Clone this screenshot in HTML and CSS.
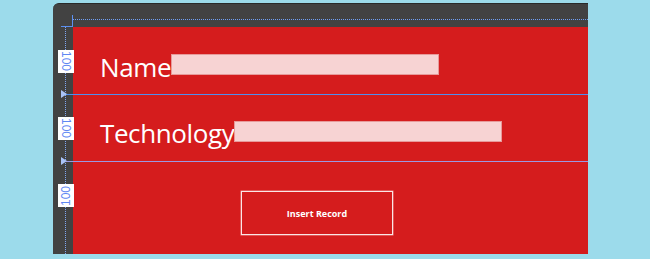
FILE: index.html
```html
<!DOCTYPE html>
<html>
<head>
<meta charset="utf-8">
<link rel="stylesheet" href="styles.css">
</head>
<body>
<div class="frame">
  <div class="topbar">
    <div class="hruler"></div>
    <div class="corner"></div>
  </div>
  <div class="grid">
    <div class="vline"></div>
    <div class="canvas"></div>

    <div class="field row1">
      <span class="label">Name</span>
      <span class="box"></span>
    </div>
    <div class="field row2">
      <span class="label">Technology</span>
      <span class="box box2"></span>
    </div>
    <div class="action row3">
      <button class="btn">Insert Record</button>
    </div>

    <div class="rowline row1"></div>
    <div class="rowline rowline2 row2"></div>

    <div class="size row1">100</div>
    <div class="size row2">100</div>
    <div class="size size-flip row3">100</div>
  </div>
</div>
</body>
</html>
```
FILE: styles.css
```css
html, body {
  margin: 0;
  padding: 0;
}
body {
  background: #9cdbeb;
  width: 650px;
  height: 259px;
  overflow: hidden;
  font-family: "Open Sans", "Noto Sans", sans-serif;
}
.frame {
  margin: 3px 0 0 53px;
  width: 535px;
  height: 251px;
  box-sizing: border-box;
  background: #424242;
  border-top: 1px solid #2a2a2a;
  border-top-left-radius: 6px;
  overflow: hidden;
  display: flex;
  flex-direction: column;
}
.topbar {
  height: 23px;
  flex: none;
  position: relative;
}
.hruler {
  margin-left: 20px;
  height: 16px;
  box-sizing: border-box;
  border-bottom: 1px dotted #6f9ff5;
}
.corner {
  position: absolute;
  left: 8px;
  top: 11px;
  width: 12px;
  height: 12px;
  box-sizing: border-box;
  border-right: 1px solid #5b8ff0;
  border-bottom: 1px solid #5b8ff0;
}
.grid {
  flex: 1;
  display: grid;
  grid-template-columns: 20px 1fr;
  grid-template-rows: 68px 67px 67px 1fr;
}
.vline {
  grid-column: 1;
  grid-row: 1 / -1;
  width: 13px;
  box-sizing: border-box;
  border-right: 1px dotted #7fa6f2;
}
.canvas {
  grid-column: 2;
  grid-row: 1 / -1;
  background: #d51c1d;
}
.row1 { grid-row: 1; }
.row2 { grid-row: 2; }
.row3 { grid-row: 3; }

.field {
  grid-column: 2;
  display: flex;
  align-items: flex-start;
  padding-left: 27px;
}
.field.row1 { padding-top: 23px; }
.field.row2 { padding-top: 21px; }
.label {
  color: #ffffff;
  font-size: 26px;
  line-height: 35px;
  letter-spacing: -0.4px;
}
.box {
  width: 268px;
  height: 21px;
  box-sizing: border-box;
  margin-top: 4px;
  background: #f7d3d3;
  border: 1px solid #e79a9a;
}
.box2 { margin-top: 5px; }

.action {
  grid-column: 2;
  padding: 29px 0 0 168px;
}
.btn {
  display: flex;
  align-items: center;
  justify-content: center;
  width: 152px;
  height: 44px;
  box-sizing: border-box;
  background: transparent;
  border: 1px solid #fbe6e6;
  box-shadow: 0 0 0 0.5px rgba(255, 220, 220, 0.6);
  color: #ffffff;
  font-family: "Open Sans", "Noto Sans", sans-serif;
  font-weight: 700;
  font-size: 9px;
  padding: 0;
}

.rowline {
  grid-column: 1 / -1;
  align-self: end;
  height: 1px;
  margin-left: 8px;
  background: #4f8ff0;
  position: relative;
}
.rowline2 { background: #9b98e2; }
.rowline::before {
  content: "";
  position: absolute;
  left: 0;
  top: -4px;
  border-left: 6px solid #a9c3f7;
  border-top: 4px solid transparent;
  border-bottom: 4px solid transparent;
}

.size {
  grid-column: 1;
  justify-self: start;
  align-self: center;
  margin-left: 5px;
  width: 16px;
  height: 23px;
  background: #ffffff;
  color: #5f88f3;
  font-family: "Liberation Sans", sans-serif;
  font-size: 12px;
  line-height: 16px;
  writing-mode: vertical-rl;
  text-align: center;
  display: flex;
  align-items: center;
  justify-content: center;
}
.size-flip {
  transform: rotate(180deg);
}
```
